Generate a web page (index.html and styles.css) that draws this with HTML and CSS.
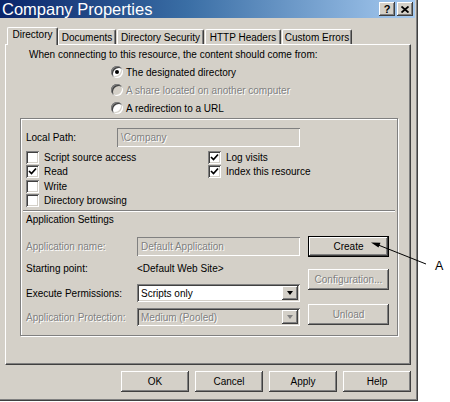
FILE: index.html
```html
<!DOCTYPE html>
<html>
<head>
<meta charset="utf-8">
<title>Company Properties</title>
<link rel="stylesheet" href="styles.css">
</head>
<body>
<div class="stage">
  <div class="dialog">
    <div class="titlebar">
      <span class="title">Company Properties</span>
      <div class="caption-btns">
        <span class="cap-btn cap-help">?</span>
        <span class="cap-btn"><svg width="8" height="7" viewBox="0 0 8 7"><path d="M0.5 0.5 L7.5 6.5 M7.5 0.5 L0.5 6.5" stroke="#000" stroke-width="1.8"/></svg></span>
      </div>
    </div>

    <div class="tabs">
      <span class="tab active tab-dir">Directory</span>
      <span class="tab tab-doc">Documents</span>
      <span class="tab tab-sec">Directory Security</span>
      <span class="tab tab-http">HTTP Headers</span>
      <span class="tab tab-err">Custom Errors</span>
    </div>

    <div class="panel">
      <p class="intro">When connecting to this resource, the content should come from:</p>
      <div class="radios">
        <div class="radio-row"><span class="radio checked"></span><span>The designated directory</span></div>
        <div class="radio-row disabled"><span class="radio"></span><span class="dis-text">A share located on another computer</span></div>
        <div class="radio-row"><span class="radio"></span><span>A redirection to a URL</span></div>
      </div>

      <div class="group">
        <div class="path-row">
          <span class="path-label">Local Path:</span>
          <span class="textbox disabled"><span class="dis-text">\Company</span></span>
        </div>

        <div class="checks">
          <div class="check-col left">
            <div class="check-row"><span class="cb"></span>Script source access</div>
            <div class="check-row"><span class="cb"><svg class="tick" width="9" height="9" viewBox="0 0 9 9"><path d="M1 4 L3.5 6.5 L8 1.5" stroke="#000" stroke-width="1.7" fill="none"/></svg></span>Read</div>
            <div class="check-row"><span class="cb"></span>Write</div>
            <div class="check-row"><span class="cb"></span>Directory browsing</div>
          </div>
          <div class="check-col">
            <div class="check-row"><span class="cb"><svg class="tick" width="9" height="9" viewBox="0 0 9 9"><path d="M1 4 L3.5 6.5 L8 1.5" stroke="#000" stroke-width="1.7" fill="none"/></svg></span>Log visits</div>
            <div class="check-row"><span class="cb"><svg class="tick" width="9" height="9" viewBox="0 0 9 9"><path d="M1 4 L3.5 6.5 L8 1.5" stroke="#000" stroke-width="1.7" fill="none"/></svg></span>Index this resource</div>
          </div>
        </div>

        <div class="sep"></div>
        <div class="section-title">Application Settings</div>

        <div class="app-area">
          <div class="app-fields">
            <div class="field-row row-name">
              <span class="field-label dis-text">Application name:</span>
              <span class="textbox disabled"><span class="dis-text">Default Application</span></span>
            </div>
            <div class="field-row row-start">
              <span class="field-label">Starting point:</span>
              <span class="field-value">&lt;Default Web Site&gt;</span>
            </div>
            <div class="field-row row-exec">
              <span class="field-label">Execute Permissions:</span>
              <span class="select"><span class="select-text">Scripts only</span><span class="select-btn"><span class="tri"></span></span></span>
            </div>
            <div class="field-row row-prot">
              <span class="field-label dis-text">Application Protection:</span>
              <span class="select disabled"><span class="select-text dis-text">Medium (Pooled)</span><span class="select-btn"><span class="tri"></span></span></span>
            </div>
          </div>
          <div class="app-buttons">
            <span class="btn default btn-create">Create</span>
            <span class="btn btn-config"><span class="dis-text">Configuration...</span></span>
            <span class="btn btn-unload"><span class="dis-text">Unload</span></span>
          </div>
        </div>
      </div>
    </div>

    <div class="footer">
      <span class="btn foot-btn">OK</span>
      <span class="btn foot-btn">Cancel</span>
      <span class="btn foot-btn">Apply</span>
      <span class="btn foot-btn">Help</span>
    </div>
  </div>

  <svg class="callout" width="450" height="402" viewBox="0 0 450 402">
    <line x1="426" y1="264" x2="377" y2="244.5" stroke="#000" stroke-width="1"/>
    <polygon points="371,242.5 380.5,242.8 378.5,247.5" fill="#000"/>
  </svg>
  <span class="callout-label">A</span>
</div>
</body>
</html>
```

FILE: styles.css
```css
* { box-sizing: border-box; }

html, body {
  margin: 0;
  padding: 0;
  background: #ffffff;
}

body {
  font-family: "Liberation Sans", Arial, sans-serif;
  font-size: 10px;
  color: #000;
}

.stage {
  position: relative;
  width: 450px;
  height: 402px;
  display: flex;
  align-items: flex-start;
}

/* ---------- Dialog frame ---------- */
.dialog {
  width: 418px;
  height: 401px;
  background: #d4d0c8;
  border-right: 1px solid #404040;
  border-bottom: 1px solid #404040;
  box-shadow: inset -1px -1px 0 #808080;
  padding-right: 3px;
  display: flex;
  flex-direction: column;
}

.titlebar {
  height: 18px;
  margin-right: -1px;
  background: linear-gradient(to right, #0a246a 0%, #3a6ea5 45%, #a6caf0 100%);
  display: flex;
  align-items: center;
  justify-content: space-between;
  padding: 0 2px 0 2px;
}

.title {
  color: #ffffff;
  font-size: 16.5px;
  line-height: 18px;
  white-space: nowrap;
}

.caption-btns {
  display: flex;
  gap: 2px;
}

.cap-btn {
  width: 16px;
  height: 14px;
  background: #d4d0c8;
  box-shadow: inset -1px -1px 0 #404040, inset 1px 1px 0 #ffffff, inset -2px -2px 0 #808080;
  display: flex;
  align-items: center;
  justify-content: center;
  font-weight: bold;
  font-size: 11px;
  line-height: 1;
}

.cap-help {
  padding-top: 1px;
}

/* ---------- Tabs ---------- */
.tabs {
  margin-top: 9px;
  height: 17px;
  padding-left: 7px;
  display: flex;
  align-items: flex-end;
}

.tab {
  height: 15px;
  background: #d4d0c8;
  border-left: 1px solid #ffffff;
  border-top: 1px solid #ffffff;
  border-right: 1px solid #404040;
  border-top-left-radius: 2px;
  border-top-right-radius: 2px;
  box-shadow: inset -1px 0 0 #808080;
  display: flex;
  align-items: center;
  justify-content: center;
  white-space: nowrap;
  line-height: 12px;
  padding-top: 1px;
}

.tab.active {
  position: relative;
  z-index: 1;
  height: 18px;
  margin-bottom: -1px;
  padding-top: 0;
  padding-bottom: 3px;
}

.tab-dir { width: 51px; }
.tab-doc { width: 58px; margin-left: 0; }
.tab-sec { width: 87px; margin-left: 1px; }
.tab-http { width: 76px; margin-left: 1px; }
.tab-err { width: 70px; margin-left: 1px; }

/* ---------- Panel ---------- */
.panel {
  margin-left: 5px;
  width: 406px;
  height: 321px;
  border-left: 1px solid #ffffff;
  border-top: 1px solid #ffffff;
  border-right: 1px solid #404040;
  border-bottom: 1px solid #404040;
  box-shadow: inset -1px -1px 0 #808080;
  display: flex;
  flex-direction: column;
}

.intro {
  margin: 4px 0 0 0;
  padding-left: 23px;
  line-height: 12px;
  white-space: nowrap;
}

.radios {
  margin-top: 2px;
  padding-left: 105px;
  display: flex;
  flex-direction: column;
}

.radio-row {
  height: 18px;
  display: flex;
  align-items: center;
  gap: 3px;
  white-space: nowrap;
}

.radio {
  width: 12px;
  height: 12px;
  border-radius: 50%;
  background: #ffffff;
  box-shadow: inset 1px 1px 0 #808080, inset -1px -1px 0 #ffffff, inset 2px 2px 0 #404040, inset -2px -2px 0 #d4d0c8;
  display: flex;
  align-items: center;
  justify-content: center;
  flex: none;
}

.radio-row.disabled .radio {
  background: #d4d0c8;
}

.radio.checked::after {
  content: "";
  width: 4px;
  height: 4px;
  border-radius: 50%;
  background: #000;
}

.dis-text {
  color: #808080;
  text-shadow: 1px 1px 0 #ffffff;
}

/* ---------- Group box ---------- */
.group {
  margin-top: 1px;
  margin-left: 14px;
  width: 378px;
  height: 218px;
  border: 1px solid #808080;
  box-shadow: inset 1px 1px 0 #ffffff, 1px 1px 0 #ffffff;
  display: flex;
  flex-direction: column;
}

.path-row {
  margin-top: 9px;
  padding-left: 5px;
  height: 19px;
  display: flex;
  align-items: center;
}

.path-label {
  width: 91px;
  flex: none;
}

.textbox {
  height: 19px;
  width: 183px;
  background: #ffffff;
  box-shadow: inset 1px 1px 0 #808080, inset -1px -1px 0 #ffffff, inset 2px 2px 0 #404040, inset -2px -2px 0 #d4d0c8;
  display: flex;
  align-items: center;
  padding-left: 4px;
  white-space: nowrap;
}

.textbox.disabled {
  background: #d4d0c8;
  box-shadow: inset 1px 1px 0 #808080, inset -1px -1px 0 #ffffff;
}

.checks {
  margin-top: 3px;
  padding-left: 5px;
  display: flex;
}

.check-col {
  display: flex;
  flex-direction: column;
}

.check-col.left {
  width: 182px;
}

.check-row {
  height: 14.5px;
  display: flex;
  align-items: center;
  gap: 5px;
  white-space: nowrap;
}

.cb {
  width: 13px;
  height: 13px;
  flex: none;
  background: #ffffff;
  box-shadow: inset 1px 1px 0 #808080, inset -1px -1px 0 #ffffff, inset 2px 2px 0 #404040, inset -2px -2px 0 #d4d0c8;
  display: flex;
  align-items: center;
  justify-content: center;
}

.tick {
  display: block;
}

.sep {
  margin: 2px 2px 0 2px;
  height: 2px;
  border-top: 1px solid #808080;
  border-bottom: 1px solid #ffffff;
}

.section-title {
  margin-top: 2px;
  padding-left: 5px;
  line-height: 12px;
}

.app-area {
  margin-top: 10px;
  padding-left: 5px;
  display: flex;
  align-items: flex-start;
}

.app-fields {
  display: flex;
  flex-direction: column;
}

.field-row {
  display: flex;
  align-items: center;
  white-space: nowrap;
}

.field-label {
  width: 111px;
  flex: none;
}

.row-name { margin-top: 1px; height: 19px; }
.row-start { margin-top: 5px; height: 14px; }
.row-exec { margin-top: 9px; height: 18px; }
.row-prot { margin-top: 6px; height: 18px; }

.field-value {
  padding-left: 0;
}

.row-name .textbox {
  width: 163px;
}

.select {
  width: 163px;
  height: 18px;
  background: #ffffff;
  box-shadow: inset 1px 1px 0 #808080, inset -1px -1px 0 #ffffff, inset 2px 2px 0 #404040, inset -2px -2px 0 #d4d0c8;
  display: flex;
  align-items: center;
  justify-content: space-between;
  padding: 2px 2px 2px 4px;
}

.select.disabled {
  background: #d4d0c8;
}

.select-btn {
  width: 16px;
  height: 14px;
  background: #d4d0c8;
  box-shadow: inset -1px -1px 0 #404040, inset 1px 1px 0 #ffffff, inset -2px -2px 0 #808080;
  display: flex;
  align-items: center;
  justify-content: center;
}

.tri {
  width: 0;
  height: 0;
  border-left: 3.5px solid transparent;
  border-right: 3.5px solid transparent;
  border-top: 4px solid #000;
}

.select.disabled .tri {
  border-top-color: #808080;
}

.app-buttons {
  margin-left: 8px;
  display: flex;
  flex-direction: column;
}

.btn {
  width: 81px;
  height: 21px;
  background: #d4d0c8;
  box-shadow: inset -1px -1px 0 #404040, inset 1px 1px 0 #ffffff, inset -2px -2px 0 #808080;
  display: flex;
  align-items: center;
  justify-content: center;
  white-space: nowrap;
}

.btn.default {
  border: 1px solid #000;
}

.btn-config { margin-top: 12px; }
.btn-unload { margin-top: 14px; }

/* ---------- Footer ---------- */
.footer {
  margin-top: 6px;
  padding-right: 3px;
  display: flex;
  justify-content: flex-end;
  gap: 6px;
}

.foot-btn {
  width: 68px;
  height: 21px;
}

/* ---------- Callout ---------- */
.callout {
  position: absolute;
  left: 0;
  top: 0;
  pointer-events: none;
}

.callout-label {
  position: absolute;
  left: 435px;
  top: 259px;
  font-size: 12.5px;
  line-height: 14px;
}
```
